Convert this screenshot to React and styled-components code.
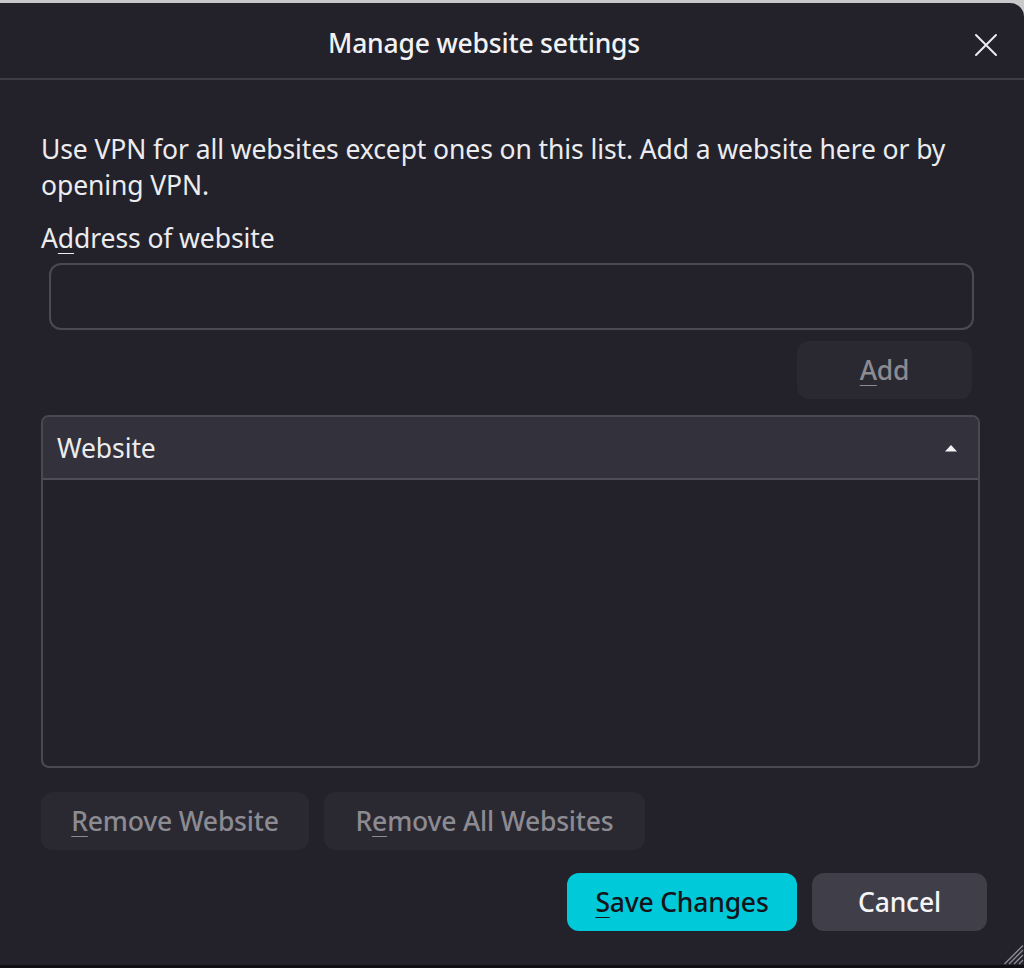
import React from "react";
import styled, { createGlobalStyle } from "styled-components";

const Global = createGlobalStyle`
  html, body { margin: 0; padding: 0; background: #3a3940; }
  body { font-family: "Noto Sans", "Open Sans", sans-serif; }
  * { box-sizing: border-box; }
`;

const Window = styled.div`
  width: 1024px;
  height: 968px;
  background: #c9c9cc;
  padding-top: 3px;
  overflow: hidden;
`;

const Dialog = styled.div`
  position: relative;
  height: 962px;
  background: #23222b;
  border-top-right-radius: 14px;
  display: flex;
  flex-direction: column;
`;

const Header = styled.header`
  height: 77px;
  flex: none;
  display: flex;
  align-items: center;
  justify-content: center;
  padding: 4px 56px 0 0;
  border-bottom: 2px solid #3e3d47;
  position: relative;
`;

const Title = styled.h1`
  margin: 0;
  font-size: 26.5px;
  font-weight: 500;
  color: #f2f2f4;
  letter-spacing: -0.2px;
`;

const CloseButton = styled.button`
  position: absolute;
  right: 24px;
  top: 28px;
  width: 28px;
  height: 28px;
  padding: 0;
  border: 0;
  background: transparent;
  display: flex;
  align-items: center;
  justify-content: center;
  cursor: pointer;
`;

const Body = styled.div`
  flex: 1;
  display: flex;
  flex-direction: column;
  padding: 51px 37px 0 41px;
`;

const Description = styled.p`
  margin: 0;
  font-size: 26.5px;
  line-height: 36px;
  color: #ececef;
  max-width: 930px;
  letter-spacing: -0.1px;
`;

const Label = styled.label`
  margin-top: 17px;
  font-size: 26.5px;
  line-height: 36px;
  color: #ececef;
  letter-spacing: -0.1px;
`;

const Key = styled.span`
  text-decoration: underline;
  text-decoration-thickness: 1px;
  text-underline-offset: 5px;
`;

const Input = styled.input`
  margin: 7px 0 0 8px;
  width: 925px;
  height: 67px;
  background: transparent;
  border: 2px solid #4b4a54;
  border-radius: 12px;
  outline: none;
  color: #ececef;
  font: inherit;
  font-size: 26px;
  padding: 0 16px;
`;

const Button = styled.button`
  height: 58px;
  width: ${(p) => p.$w}px;
  border: 0;
  border-radius: 12px;
  font-family: inherit;
  font-size: 26.5px;
  letter-spacing: -0.2px;
  font-weight: 500;
  background: ${(p) =>
    p.$variant === "primary" ? "#00c9d9" : p.$variant === "neutral" ? "#403f49" : "#2a2932"};
  color: ${(p) =>
    p.$variant === "primary" ? "#14141a" : p.$variant === "neutral" ? "#f5f5f7" : "#8c8b92"};
  display: flex;
  align-items: center;
  justify-content: center;
  padding: 0;
  cursor: pointer;
`;

const AddRow = styled.div`
  margin-top: 11px;
  display: flex;
  justify-content: flex-end;
  padding-right: 15px;
`;

const Table = styled.div`
  margin-top: 16px;
  width: 939px;
  height: 353px;
  border: 2px solid #4a4953;
  border-radius: 8px;
  display: flex;
  flex-direction: column;
  overflow: hidden;
`;

const TableHead = styled.div`
  height: 63px;
  flex: none;
  background: #33323c;
  border-bottom: 2px solid #4f4e58;
  display: flex;
  align-items: center;
  justify-content: space-between;
  padding: 0 20px 0 14px;
  font-size: 26.5px;
  letter-spacing: -0.1px;
  color: #ececef;
`;

const TableBody = styled.div`
  flex: 1;
`;

const ButtonRow = styled.div`
  margin-top: ${(p) => p.$top}px;
  display: flex;
  gap: 15px;
  justify-content: ${(p) => (p.$end ? "flex-end" : "flex-start")};
`;

const Grip = styled.svg`
  position: absolute;
  right: 0;
  bottom: 0;
`;

const BottomEdge = styled.div`
  height: 3px;
  background: #101014;
`;

export default function App() {
  return (
    <>
      <Global />
      <Window>
        <Dialog>
          <Header>
            <Title>Manage website settings</Title>
            <CloseButton aria-label="Close">
              <svg width="24" height="24" viewBox="0 0 24 24">
                <path d="M2 2 L22 22 M22 2 L2 22" stroke="#ececef" strokeWidth="2" strokeLinecap="round" />
              </svg>
            </CloseButton>
          </Header>
          <Body>
            <Description>
              Use VPN for all websites except ones on this list. Add a website here or by opening VPN.
            </Description>
            <Label htmlFor="site">
              A<Key>d</Key>dress of website
            </Label>
            <Input id="site" />
            <AddRow>
              <Button $w={175}>
                <span>
                  <Key>A</Key>dd
                </span>
              </Button>
            </AddRow>
            <Table>
              <TableHead>
                <span>Website</span>
                <svg width="14" height="8" viewBox="0 0 14 8">
                  <path d="M1 7.5 L7 1 L13 7.5 Z" fill="#f2f2f4" />
                </svg>
              </TableHead>
              <TableBody />
            </Table>
            <ButtonRow $top={24}>
              <Button $w={268}>
                <span>
                  <Key>R</Key>emove Website
                </span>
              </Button>
              <Button $w={321}>
                <span>
                  R<Key>e</Key>move All Websites
                </span>
              </Button>
            </ButtonRow>
            <ButtonRow $top={23} $end>
              <Button $w={230} $variant="primary">
                <span>
                  <Key>S</Key>ave Changes
                </span>
              </Button>
              <Button $w={175} $variant="neutral">
                Cancel
              </Button>
            </ButtonRow>
          </Body>
          <Grip width="20" height="20" viewBox="0 0 20 20">
            <path d="M19 5 L5 19 M19 10 L10 19 M19 15 L15 19 M19 0.5 L0.5 19" stroke="#8e8d95" strokeWidth="1.3" />
          </Grip>
        </Dialog>
        <BottomEdge />
      </Window>
    </>
  );
}
